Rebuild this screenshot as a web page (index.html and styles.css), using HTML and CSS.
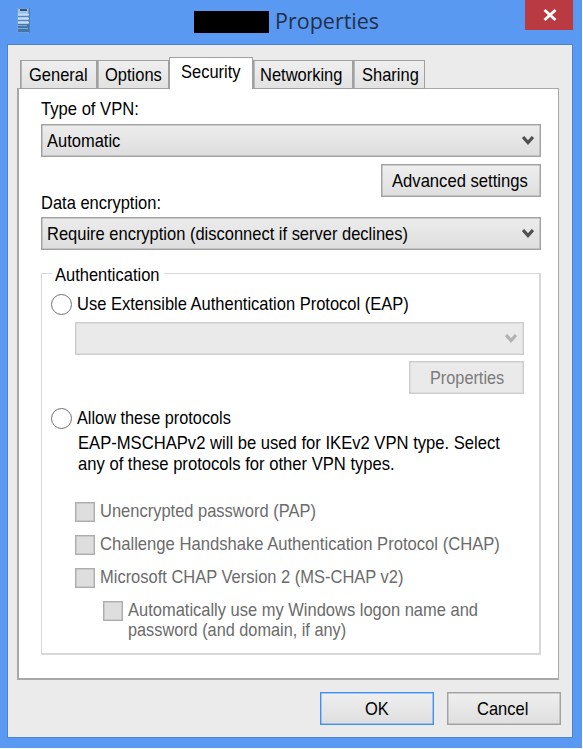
FILE: index.html
```
<!DOCTYPE html>
<html lang="en">
<head>
    <meta charset="UTF-8">
    <title>Properties</title>
    <link rel="stylesheet" href="styles.css">
</head>
<body>
<div class="window">
    <div class="titlebar">
        <svg class="app-icon" width="13" height="25" viewBox="0 0 13 25">
            <rect width="13" height="25" fill="#6f9fd6"/>
            <rect width="10" height="15" x="1" y="1" fill="#9cc3ea"/>
            <path d="M3 2h7" stroke="#1c3555" stroke-width="1.6"/>
            <path d="M1 6.500h11M1 10.500h11M1 14.500h11" stroke="#c5e0f5" stroke-width="1.5"/>
            <path d="M1 8.500h11M1 12.500h11" stroke="#5686bd"/>
            <path d="M1 16h11v8H1z" fill="#4475aa"/>
            <path d="M1 17.500h9M1 20.500h10" stroke="#7fabd8"/>
            <path d="M12.500 0v25" stroke="#4a7fbe"/>
        </svg>
        <div class="title"><span class="redacted"></span><span class="title-text">Properties</span></div>
        <div class="close">
            <svg width="14" height="12" viewBox="0 0 14 12"><path d="M1.500 1l11 10M12.500 1l-11 10" stroke="#fff" stroke-width="2.800"/></svg>
        </div>
    </div>
    <div class="client">
        <div class="tabs">
            <div class="tab general"><span class="t">General</span></div>
            <div class="tab options"><span class="t">Options</span></div>
            <div class="tab security active"><span class="t">Security</span></div>
            <div class="tab networking"><span class="t">Networking</span></div>
            <div class="tab sharing"><span class="t">Sharing</span></div>
        </div>
        <div class="panel">
            <div class="label"><span class="t wide">Type of VPN:</span></div>
            <div class="combo">
                <span class="t">Automatic</span>
                <svg class="arrow" width="12" height="10" viewBox="0 0 12 10"><path d="M1 1l5 5.500L11 1" fill="none" stroke="#505050" stroke-width="3.200"/></svg>
            </div>
            <div class="button advanced"><span class="t wide">Advanced settings</span></div>
            <div class="label encryption"><span class="t">Data encryption:</span></div>
            <div class="combo">
                <span class="t">Require encryption (disconnect if server declines)</span>
                <svg class="arrow" width="12" height="10" viewBox="0 0 12 10"><path d="M1 1l5 5.500L11 1" fill="none" stroke="#505050" stroke-width="3.200"/></svg>
            </div>
            <div class="group">
                <div class="legend"><span class="t">Authentication</span></div>
                <div class="radio eap"><i></i><span class="t">Use Extensible Authentication Protocol (EAP)</span></div>
                <div class="combo disabled">
                    <svg class="arrow" width="12" height="10" viewBox="0 0 12 10"><path d="M1 1l5 5.500L11 1" fill="none" stroke="#b2b2b2" stroke-width="3.200"/></svg>
                </div>
                <div class="button disabled props"><span class="t narrow">Properties</span></div>
                <div class="radio allow"><i></i><span class="t narrow">Allow these protocols</span></div>
                <div class="note">
                    <span class="t wide">EAP-MSCHAPv2 will be used for IKEv2 VPN type. Select</span>
                    <span class="t wide">any of these protocols for other VPN types.</span>
                </div>
                <div class="check"><i></i><span class="t">Unencrypted password (PAP)</span></div>
                <div class="check"><i></i><span class="t wide">Challenge Handshake Authentication Protocol (CHAP)</span></div>
                <div class="check"><i></i><span class="t">Microsoft CHAP Version 2 (MS-CHAP v2)</span></div>
                <div class="check sub">
                    <i></i>
                    <div class="lines">
                        <span class="t">Automatically use my Windows logon name and</span>
                        <span class="t narrow">password (and domain, if any)</span>
                    </div>
                </div>
            </div>
        </div>
        <div class="footer">
            <div class="button ok"><span class="t">OK</span></div>
            <div class="button cancel"><span class="t">Cancel</span></div>
        </div>
    </div>
</div>
</body>
</html>
```
FILE: styles.css
```
* {
    box-sizing: border-box;
}
body {
    margin: 0;
    background: #fff;
    color: #000;
    font-family: "Liberation Sans", Arial, sans-serif;
    font-size: 18.5px;
    line-height: 20px;
    overflow: hidden;
}
.window {
    width: 582px;
    height: 748px;
    padding: 0 9px 10px 7px;
    background: #5a99f2;
}
/* Condensed dialog lettering */
.t {
    display: block;
    white-space: nowrap;
    transform: scaleX(0.891);
    transform-origin: left center;
}
.t.wide {
    transform: scaleX(0.898);
}
.t.narrow {
    transform: scaleX(0.88);
}
.titlebar {
    display: flex;
    height: 44px;
    align-items: flex-start;
}
.app-icon {
    margin: 8px 0 0 10px;
}
.title {
    display: flex;
    margin: 6px 0 0 164px;
    width: 331px;
}
.redacted {
    width: 75px;
    height: 22px;
    margin: 5px 6px 0 0;
    background: #000;
}
.title-text {
    font-family: "Open Sans", "Noto Sans", sans-serif;
    font-size: 21.5px;
    line-height: 30px;
    color: #23304a;
}
.close {
    display: flex;
    flex: none;
    justify-content: center;
    align-items: center;
    width: 48px;
    height: 30px;
    padding-left: 2px;
    background: #b93a40;
}
.client {
    height: 694px;
    padding: 12px 9px 0;
    border: 1px solid #4b83d0;
    background: #ebebeb;
}
.tabs {
    display: flex;
    align-items: flex-end;
    height: 32px;
    margin: 0 0 -1px 3px;
}
.tab {
    height: 29px;
    padding: 4px 0 0 8px;
    border: 1px solid #a0a0a0;
    background: linear-gradient(#efefef, #e2e2e2);
    box-shadow: inset 1px 0 #b8b8b8;
}
.general { width: 77px; }
.options { width: 72px; padding-left: 7px; }
.security { width: 84px; }
.networking { width: 100px; padding-left: 6px; }
.sharing { width: 72px; }
.tab.active {
    position: relative;
    height: 32px;
    padding: 4px 0 0 11px;
    border-bottom: 0;
    background: #fff;
    box-shadow: none;
}
.panel {
    width: 542px;
    height: 592px;
    padding: 10px 17px 0 22px;
    border: 2px solid #a8a8a8;
    border-width: 1px 1px 2px 2px;
    background: #fff;
}
.label {
    height: 25px;
}
.combo {
    display: flex;
    align-items: center;
    justify-content: space-between;
    width: 500px;
    height: 33px;
    padding: 0 6px 0 5px;
    border: 1px solid #a2a2a2;
    background: linear-gradient(#ececec, #dedede);
    box-shadow: 0 0 0 0.5px #a8a8a8 inset;
}
.arrow {
    flex: none;
    margin-left: auto;
}
.button {
    display: flex;
    height: 33px;
    align-items: center;
    border: 1px solid #a2a2a2;
    background: linear-gradient(#efefef, #dedede);
    box-shadow: 0 0 0 0.5px #a8a8a8 inset;
}
.advanced {
    width: 160px;
    margin: 7px 0 0 340px;
    padding-left: 10px;
}
.encryption {
    height: 24px;
    padding-top: 0;
    margin-top: -4px;
}
.group {
    width: 500px;
    height: 382px;
    margin-top: 23px;
    border: 1px solid #d8d8d8;
    border-width: 1px 2px 2px 1px;
}
.legend {
    width: 112px;
    margin: -9px 0 0 10px;
    padding-left: 3px;
    background: #fff;
}
.radio {
    display: flex;
    align-items: center;
    height: 22px;
    padding-left: 9px;
}
.radio i {
    flex: none;
    width: 21px;
    height: 21px;
    margin-right: 5px;
    border: 1.5px solid #717171;
    border-radius: 50%;
}
.eap {
    margin-top: 8px;
}
.group .combo {
    width: 449px;
    margin: 7px 0 0 33px;
}
.combo.disabled, .button.disabled {
    border-color: #cdcdcd;
    background: #eaeaea;
    box-shadow: 0 0 0 0.5px #d0d0d0 inset;
    color: #7b7b7b;
}
.props {
    width: 115px;
    margin: 6px 0 0 367px;
    padding-left: 20px;
}
.allow {
    margin-top: 13px;
}
.note {
    margin: 4px 0 27px 36px;
    line-height: 20.5px;
}
.check {
    display: flex;
    height: 33px;
    padding-left: 33px;
    color: #6b6b6b;
}
.check i {
    flex: none;
    width: 20px;
    height: 20px;
    margin: 1px 5px 0 0;
    border: 1px solid #adadad;
    background: #dedede;
    box-shadow: 0 0 0 0.5px #b4b4b4 inset;
}
.sub {
    padding-left: 61px;
}
.footer {
    display: flex;
    gap: 13px;
    margin: 12px 0 0 303px;
}
.ok {
    width: 114px;
    padding-left: 44px;
    border-color: #3f8ff5;
    box-shadow: 0 0 0 0.5px #5a9ff7 inset;
}
.cancel {
    width: 114px;
    padding-left: 29px;
}
```
